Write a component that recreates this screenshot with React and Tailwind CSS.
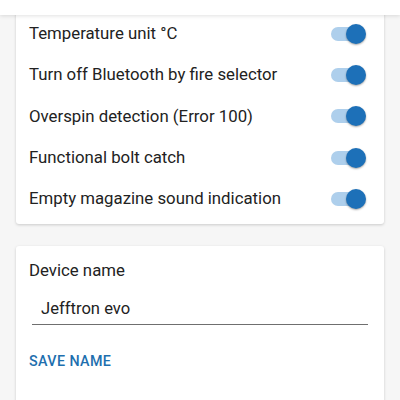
import React from "react";

const rows = [
  "Temperature unit °C",
  "Turn off Bluetooth by fire selector",
  "Overspin detection (Error 100)",
  "Functional bolt catch",
  "Empty magazine sound indication",
];

function Toggle() {
  return (
    <div className="relative w-[35px] h-[20px] flex items-center">
      <div className="w-[33px] h-[14px] rounded-full bg-[#aecfec]" />
      <div className="absolute right-0 top-0 w-[20px] h-[20px] rounded-full bg-[#1d70b8] shadow-[0_1px_2px_rgba(0,0,0,0.35)]" />
    </div>
  );
}

export default function App() {
  return (
    <div
      className="relative w-[400px] h-[400px] overflow-hidden bg-[#f6f6f6]"
      style={{ fontFamily: "Roboto, 'Noto Sans', sans-serif" }}
    >
      <div className="absolute left-0 top-0 w-full h-[15px] bg-white shadow-[0_1px_4px_rgba(0,0,0,0.12)] z-10" />
      <div className="px-[16px]">
        <div className="bg-white rounded-[3px] shadow-[0_1px_3px_rgba(0,0,0,0.18)] pt-[13px] pb-[5px] pl-[13px] pr-[18px]">
          {rows.map((r) => (
            <div key={r} className="h-[41.3px] flex items-center justify-between">
              <span className="text-[16.8px] text-[#222222]">{r}</span>
              <Toggle />
            </div>
          ))}
        </div>
        <div className="mt-[22px] bg-white rounded-[3px] shadow-[0_1px_3px_rgba(0,0,0,0.18)] pl-[13px] pr-[16px] pt-[14px] h-[200px]">
          <div className="text-[16.8px] text-[#222222] leading-[20px]">Device name</div>
          <div className="mt-[17px] ml-[3px] border-b border-[#6f6f6f] pl-[9px] pb-[3px]">
            <span className="text-[16.6px] text-[#222222] leading-[20px]">Jefftron evo</span>
          </div>
          <div className="mt-[27px] text-[14.3px] font-medium tracking-[0.4px] text-[#1e6fae] leading-[18px]">
            SAVE NAME
          </div>
        </div>
      </div>
    </div>
  );
}
